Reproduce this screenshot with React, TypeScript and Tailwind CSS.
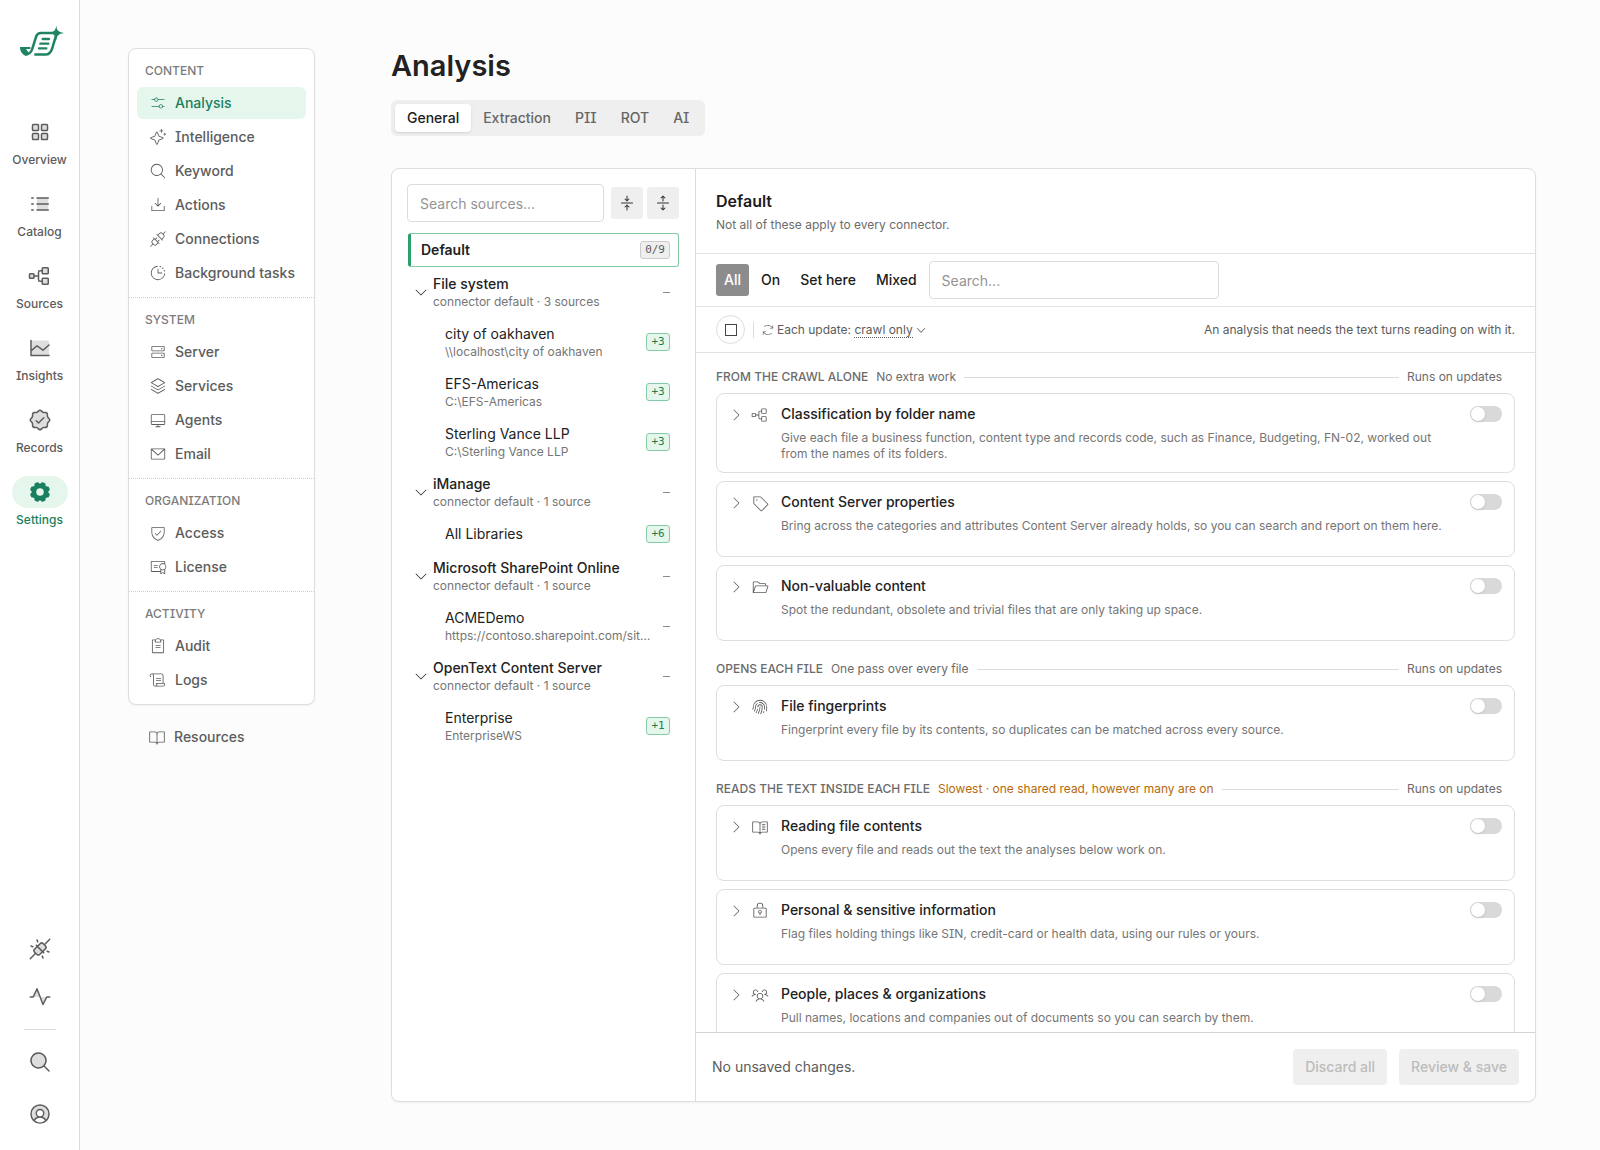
import type { ReactNode } from "react";
import type { IconType } from "react-icons";
import {
  PiArrowsClockwiseLight,
  PiArrowsInLineVertical,
  PiArrowsOutLineVertical,
  PiBookOpenLight,
  PiBookOpenTextLight,
  PiCaretDownLight,
  PiCaretDown,
  PiCaretRightLight,
  PiCertificateLight,
  PiChartLineDuotone,
  PiClipboardTextLight,
  PiClockCountdownLight,
  PiDesktopLight,
  PiDownloadSimpleLight,
  PiEnvelopeSimpleLight,
  PiFingerprintLight,
  PiFolderOpenLight,
  PiGearFill,
  PiHardDrivesLight,
  PiListDashesDuotone,
  PiLockKeyLight,
  PiMagnifyingGlassDuotone,
  PiMagnifyingGlassLight,
  PiPlugsConnectedDuotone,
  PiPlugsLight,
  PiPulseDuotone,
  PiScrollLight,
  PiSealCheckDuotone,
  PiShieldCheckLight,
  PiSlidersHorizontalLight,
  PiSparkleLight,
  PiSquaresFourDuotone,
  PiStackLight,
  PiTagLight,
  PiTreeStructureDuotone,
  PiTreeStructureLight,
  PiUserCircleDuotone,
  PiUsersThreeLight,
} from "react-icons/pi";

const railItems: { label: string; icon: IconType; active?: boolean }[] = [
  { label: "Overview", icon: PiSquaresFourDuotone },
  { label: "Catalog", icon: PiListDashesDuotone },
  { label: "Sources", icon: PiTreeStructureDuotone },
  { label: "Insights", icon: PiChartLineDuotone },
  { label: "Records", icon: PiSealCheckDuotone },
  { label: "Settings", icon: PiGearFill, active: true },
];

const navSections: { title: string; items: { label: string; icon: IconType; active?: boolean }[] }[] = [
  {
    title: "Content",
    items: [
      { label: "Analysis", icon: PiSlidersHorizontalLight, active: true },
      { label: "Intelligence", icon: PiSparkleLight },
      { label: "Keyword", icon: PiMagnifyingGlassLight },
      { label: "Actions", icon: PiDownloadSimpleLight },
      { label: "Connections", icon: PiPlugsLight },
      { label: "Background tasks", icon: PiClockCountdownLight },
    ],
  },
  {
    title: "System",
    items: [
      { label: "Server", icon: PiHardDrivesLight },
      { label: "Services", icon: PiStackLight },
      { label: "Agents", icon: PiDesktopLight },
      { label: "Email", icon: PiEnvelopeSimpleLight },
    ],
  },
  {
    title: "Organization",
    items: [
      { label: "Access", icon: PiShieldCheckLight },
      { label: "License", icon: PiCertificateLight },
    ],
  },
  {
    title: "Activity",
    items: [
      { label: "Audit", icon: PiClipboardTextLight },
      { label: "Logs", icon: PiScrollLight },
    ],
  },
];

const groups: { name: string; detail: string; sources: { name: string; path?: string; badge?: string }[] }[] = [
  {
    name: "File system",
    detail: "connector default · 3 sources",
    sources: [
      { name: "city of oakhaven", path: "\\\\localhost\\city of oakhaven", badge: "+3" },
      { name: "EFS-Americas", path: "C:\\EFS-Americas", badge: "+3" },
      { name: "Sterling Vance LLP", path: "C:\\Sterling Vance LLP", badge: "+3" },
    ],
  },
  {
    name: "iManage",
    detail: "connector default · 1 source",
    sources: [{ name: "All Libraries", badge: "+6" }],
  },
  {
    name: "Microsoft SharePoint Online",
    detail: "connector default · 1 source",
    sources: [{ name: "ACMEDemo", path: "https://contoso.sharepoint.com/sites/acmedemo" }],
  },
  {
    name: "OpenText Content Server",
    detail: "connector default · 1 source",
    sources: [{ name: "Enterprise", path: "EnterpriseWS", badge: "+1" }],
  },
];

const analysisSections: {
  title: string;
  note: string;
  warn?: boolean;
  cards: { title: string; text: string; icon: IconType }[];
}[] = [
  {
    title: "From the crawl alone",
    note: "No extra work",
    cards: [
      {
        title: "Classification by folder name",
        text: "Give each file a business function, content type and records code, such as Finance, Budgeting, FN-02, worked out from the names of its folders.",
        icon: PiTreeStructureLight,
      },
      {
        title: "Content Server properties",
        text: "Bring across the categories and attributes Content Server already holds, so you can search and report on them here.",
        icon: PiTagLight,
      },
      {
        title: "Non-valuable content",
        text: "Spot the redundant, obsolete and trivial files that are only taking up space.",
        icon: PiFolderOpenLight,
      },
    ],
  },
  {
    title: "Opens each file",
    note: "One pass over every file",
    cards: [
      {
        title: "File fingerprints",
        text: "Fingerprint every file by its contents, so duplicates can be matched across every source.",
        icon: PiFingerprintLight,
      },
    ],
  },
  {
    title: "Reads the text inside each file",
    note: "Slowest · one shared read, however many are on",
    warn: true,
    cards: [
      {
        title: "Reading file contents",
        text: "Opens every file and reads out the text the analyses below work on.",
        icon: PiBookOpenTextLight,
      },
      {
        title: "Personal & sensitive information",
        text: "Flag files holding things like SIN, credit-card or health data, using our rules or yours.",
        icon: PiLockKeyLight,
      },
      {
        title: "People, places & organizations",
        text: "Pull names, locations and companies out of documents so you can search by them.",
        icon: PiUsersThreeLight,
      },
    ],
  },
];

function Logo() {
  return (
    <svg viewBox="60 75 132 96" className="h-8 w-11 text-[#1f8463]" fill="none" stroke="currentColor" role="img" aria-label="Home">
      <path d="M60 141H91V147H78L88 161C83 168 76 168 71 164C64 160 60 151 60 141Z" fill="currentColor" stroke="none" />
      <path
        d="M75 163.500C88 163.500 93 157 96 149L109 108C112 100 116 99 123 99H167"
        strokeWidth="7.500"
        strokeLinejoin="round"
      />
      <path d="M170 100L156 147C152 158 147 163.500 137 163.500H103" strokeWidth="7.500" />
      <path d="M128 117H147M121 131H145M117 145H139" strokeWidth="7" strokeLinecap="round" />
      <path
        d="M169 76C170 90 173 96 192 99C175 102 171 106 169 121C166 107 163 102 150 99C163 95 167 91 169 76Z"
        fill="currentColor"
        stroke="none"
      />
    </svg>
  );
}

function Rail() {
  return (
    <aside className="flex w-20 shrink-0 flex-col items-center border-r border-[#dcdcdc] bg-white pt-[25px] pb-6">
      <a href="#home" className="pl-1">
        <Logo />
      </a>
      <nav className="mt-[59px] flex flex-col gap-5">
        {railItems.map(({ label, icon: Icon, active }) => (
          <a
            key={label}
            href={`#${label.toLowerCase()}`}
            className={`flex flex-col items-center gap-1 ${active ? "text-[#1a7f5f]" : "text-[#5c5c5c]"}`}
          >
            <span className={`flex h-8 w-14 items-center justify-center rounded-full ${active ? "bg-[#e5f6ed]" : ""}`}>
              <Icon className="size-6" />
            </span>
            <span className="text-xs font-medium">{label}</span>
          </a>
        ))}
      </nav>
      <div className="mt-auto flex flex-col items-center text-[#5c5c5c]">
        <button type="button" aria-label="Connection status">
          <PiPlugsConnectedDuotone className="size-6" />
        </button>
        <button type="button" aria-label="Activity" className="mt-6">
          <PiPulseDuotone className="size-6" />
        </button>
        <hr className="mt-5 w-8 border-[#dcdcdc]" />
        <button type="button" aria-label="Search" className="mt-5">
          <PiMagnifyingGlassDuotone className="size-6" />
        </button>
        <button type="button" aria-label="Account" className="mt-7">
          <PiUserCircleDuotone className="size-6" />
        </button>
      </div>
    </aside>
  );
}

function SettingsNav() {
  return (
    <nav className="w-[187px] shrink-0 text-sm font-medium text-[#5c5c5c]">
      <div className="rounded-lg border border-[#dedede] bg-white shadow-xs">
        {navSections.map((section) => (
          <section key={section.title} className="border-b border-dotted border-[#cfcfcf] px-2 pt-[14px] pb-2 last:border-b-0">
            <h2 className="px-2 text-xs font-medium text-[#7c7c7c] uppercase">{section.title}</h2>
            <ul className="mt-2 flex flex-col gap-0.5">
              {section.items.map(({ label, icon: Icon, active }) => (
                <li key={label}>
                  <a
                    href={`#${label.toLowerCase().replace(" ", "-")}`}
                    className={`flex h-8 items-center gap-2 rounded-md pl-3 whitespace-nowrap ${active ? "bg-[#e5f6ed] text-[#1a7f5f]" : ""}`}
                  >
                    <Icon className="size-[18px] shrink-0" />
                    {label}
                  </a>
                </li>
              ))}
            </ul>
          </section>
        ))}
      </div>
      <a href="#resources" className="mt-4 flex h-8 items-center gap-2 pl-5">
        <PiBookOpenLight className="size-[18px]" />
        Resources
      </a>
    </nav>
  );
}

function Tabs() {
  return (
    <div role="tablist" className="mt-4 flex w-fit rounded-md bg-[#efefef] p-1">
      {["General", "Extraction", "PII", "ROT", "AI"].map((tab, i) => (
        <button
          key={tab}
          type="button"
          role="tab"
          aria-selected={i === 0}
          className={`h-7 rounded px-3 text-sm font-medium ${i === 0 ? "bg-white text-[#1c1c1c] shadow-sm" : "text-[#666666]"}`}
        >
          {tab}
        </button>
      ))}
    </div>
  );
}

function Badge({ children, muted }: { children: ReactNode; muted?: boolean }) {
  return (
    <span
      className={`min-w-6 shrink-0 rounded-[3px] border px-1 text-center font-['DejaVu_Sans_Mono',monospace] text-[11px] leading-4 font-normal ${
        muted ? "border-[#cccccc] bg-[#efefef] text-[#5c5c5c]" : "border-[#86cba8] bg-[#e5f6ed] text-[#1a7f4f]"
      }`}
    >
      {children}
    </span>
  );
}

function Dash() {
  return <span className="h-px w-[7px] shrink-0 bg-[#8a8a8a]" />;
}

function SourceTree() {
  return (
    <div className="w-[304px] shrink-0 border-r border-[#dcdcdc] pt-[15px] pr-4 pl-[15px]">
      <div className="flex items-center gap-1">
        <input
          type="search"
          aria-label="Search sources"
          placeholder="Search sources..."
          className="mr-[3px] h-[38px] w-0 flex-1 rounded border border-[#dcdcdc] bg-white px-3 text-sm placeholder:text-[#949494]"
        />
        <button type="button" aria-label="Collapse all" className="flex size-8 items-center justify-center rounded-[3px] bg-[#efefef] text-[#333333]">
          <PiArrowsInLineVertical className="size-4" />
        </button>
        <button type="button" aria-label="Expand all" className="flex size-8 items-center justify-center rounded-[3px] bg-[#efefef] text-[#333333]">
          <PiArrowsOutLineVertical className="size-4" />
        </button>
      </div>
      <div className="mt-[11px] ml-px text-sm text-[#222222]">
        <button
          type="button"
          className="flex h-[34px] w-full items-center justify-between rounded-[3px] border border-l-3 border-[#7fc9a3] border-l-[#2aa06c] pr-2 pl-[10px]"
        >
          <span className="font-semibold">Default</span>
          <Badge muted>0/9</Badge>
        </button>
        {groups.map((group) => (
          <div key={group.name}>
            <button type="button" aria-expanded="true" className="flex h-[50px] w-full items-center pr-[9px] pl-[5px] text-left">
              <PiCaretDownLight className="mr-1 size-4 shrink-0" />
              <span className="min-w-0 flex-1">
                <span className="block truncate leading-5 font-medium">{group.name}</span>
                <span className="block truncate text-xs text-[#757575]">{group.detail}</span>
              </span>
              <Dash />
            </button>
            {group.sources.map((source) => (
              <button
                key={source.name}
                type="button"
                className={`flex w-full items-center justify-between gap-3 pr-[9px] pl-[37px] text-left ${source.path ? "h-[50px]" : "h-[34px]"}`}
              >
                <span className="min-w-0">
                  <span className="block truncate leading-5">{source.name}</span>
                  {source.path && <span className="block truncate text-xs text-[#757575]">{source.path}</span>}
                </span>
                {source.badge ? <Badge>{source.badge}</Badge> : <Dash />}
              </button>
            ))}
          </div>
        ))}
      </div>
    </div>
  );
}

function Switch({ label }: { label: string }) {
  return (
    <input
      type="checkbox"
      role="switch"
      aria-label={label}
      className="mt-0.5 flex h-4 w-8 shrink-0 appearance-none items-center rounded-full bg-[#d9d9d9] p-px before:size-[14px] before:rounded-full before:bg-white before:shadow-sm"
    />
  );
}

function AnalysisList() {
  return (
    <div className="flex min-h-0 flex-1 flex-col gap-5 overflow-hidden px-5 pt-4">
      {analysisSections.map((section) => (
        <section key={section.title} className="shrink-0">
          <div className="flex items-center gap-2 pr-[13px] text-xs text-[#6b6b6b]">
            <h3 className="font-medium uppercase">{section.title}</h3>
            <span className={section.warn ? "text-[#b7690a]" : ""}>{section.note}</span>
            <span className="h-px flex-1 bg-[#dcdcdc]" />
            <span>Runs on updates</span>
          </div>
          <div className="mt-2 flex flex-col gap-2">
            {section.cards.map(({ title, text, icon: Icon }) => (
              <article key={title} className="flex min-h-[76px] items-start rounded-lg border border-[#dedede] bg-white py-[10px] pr-3 pl-[11px]">
                <button type="button" aria-label={`Expand ${title}`} className="flex h-5 items-center text-[#5c5c5c]">
                  <PiCaretRightLight className="mt-0.5 size-4" />
                </button>
                <Icon className="mt-0.5 ml-[7px] size-[18px] shrink-0 text-[#5c5c5c]" />
                <div className="mr-4 ml-3 min-w-0 flex-1">
                  <h4 className="text-sm font-medium text-[#222222]">{title}</h4>
                  <p className="mt-1.5 text-xs text-[#757575]">{text}</p>
                </div>
                <Switch label={title} />
              </article>
            ))}
          </div>
        </section>
      ))}
    </div>
  );
}

function Detail() {
  return (
    <div className="flex min-w-0 flex-1 flex-col">
      <header className="h-[85px] border-b border-[#e2e2e2] px-5 pt-5">
        <h2 className="text-base font-semibold text-[#1c1c1c]">Default</h2>
        <p className="mt-1 text-xs text-[#6b6b6b]">Not all of these apply to every connector.</p>
      </header>
      <div className="flex h-[53px] items-center gap-1 border-b border-[#e2e2e2] px-5">
        {["All", "On", "Set here", "Mixed"].map((filter, i) => (
          <button
            key={filter}
            type="button"
            aria-pressed={i === 0}
            className={`h-8 rounded-[3px] px-2 text-sm font-medium ${i === 0 ? "bg-[#8c8c8c] text-white" : "text-[#1c1c1c]"}`}
          >
            {filter}
          </button>
        ))}
        <input
          type="search"
          aria-label="Search analyses"
          placeholder="Search..."
          className="h-[38px] w-[290px] rounded border border-[#dcdcdc] bg-white px-3 text-sm placeholder:text-[#949494]"
        />
      </div>
      <div className="flex h-[46px] shrink-0 items-center border-b border-[#e2e2e2] px-5 text-xs text-[#5c5c5c]">
        <label className="flex size-[29px] items-center justify-center rounded-full border border-[#dcdcdc]">
          <input type="checkbox" aria-label="Select all" className="size-3 appearance-none border border-[#444444]" />
        </label>
        <span className="ml-2 h-4 w-px bg-[#dcdcdc]" />
        <button type="button" className="ml-[7px] flex items-center">
          <PiArrowsClockwiseLight className="mr-0.5 size-[14px]" />
          <span>
            Each update: <span className="border-b border-dotted border-[#5c5c5c]">crawl only</span>
          </span>
          <PiCaretDown className="ml-0.5 size-3" />
        </button>
        <p className="ml-auto">An analysis that needs the text turns reading on with it.</p>
      </div>
      <AnalysisList />
      <footer className="flex h-[69px] shrink-0 items-center gap-3 border-t border-[#d4d4d4] px-4 text-sm">
        <p className="mr-auto text-[#5c5c5c]">No unsaved changes.</p>
        {["Discard all", "Review & save"].map((label) => (
          <button key={label} type="button" disabled className="h-9 rounded bg-[#efefef] px-3 font-medium text-[#bcbcbc]">
            {label}
          </button>
        ))}
      </footer>
    </div>
  );
}

export default function App() {
  return (
    <div className="flex h-screen bg-[#fcfcfc] font-['Inter',sans-serif] text-[#222222] [font-feature-settings:'cv08']">
      <Rail />
      <div className="flex min-w-0 flex-1 gap-[76px] py-12 pr-16 pl-12">
        <SettingsNav />
        <main className="flex min-w-0 flex-1 flex-col">
          <h1 className="text-[29px] leading-9 font-semibold">Analysis</h1>
          <Tabs />
          <div className="mt-8 flex min-h-0 flex-1 overflow-hidden rounded-lg border border-[#dedede] bg-white shadow-xs">
            <SourceTree />
            <Detail />
          </div>
        </main>
      </div>
    </div>
  );
}
